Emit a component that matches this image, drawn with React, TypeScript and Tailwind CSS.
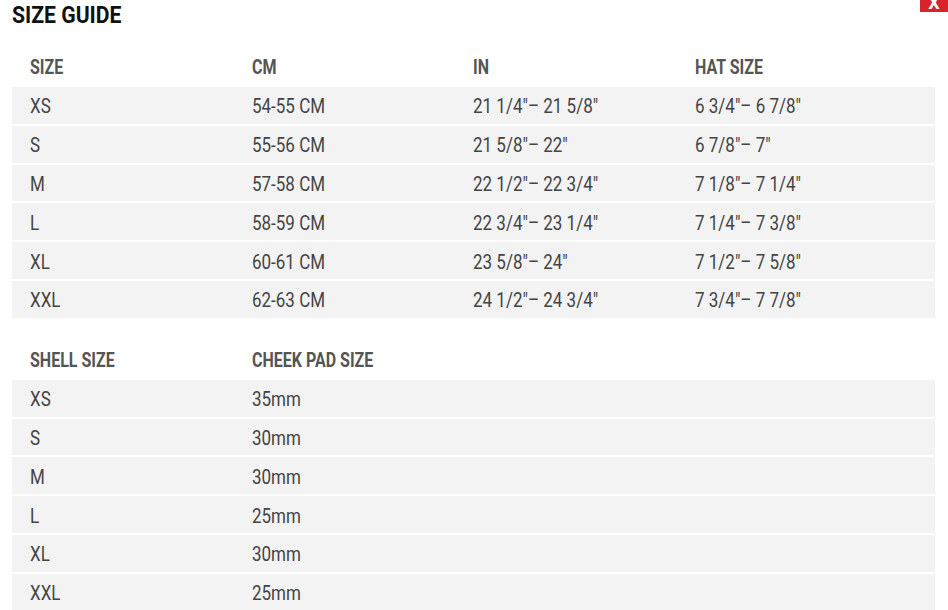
import React from "react";

const font = { fontFamily: 'Roboto, "Liberation Sans", sans-serif' };

const sizes = [
  ["XS", "54-55 CM", "21 1/4\"– 21 5/8\"", "6 3/4\"– 6 7/8\""],
  ["S", "55-56 CM", "21 5/8\"– 22\"", "6 7/8\"– 7\""],
  ["M", "57-58 CM", "22 1/2\"– 22 3/4\"", "7 1/8\"– 7 1/4\""],
  ["L", "58-59 CM", "22 3/4\"– 23 1/4\"", "7 1/4\"– 7 3/8\""],
  ["XL", "60-61 CM", "23 5/8\"– 24\"", "7 1/2\"– 7 5/8\""],
  ["XXL", "62-63 CM", "24 1/2\"– 24 3/4\"", "7 3/4\"– 7 7/8\""],
];

const shells = [
  ["XS", "35mm"],
  ["S", "30mm"],
  ["M", "30mm"],
  ["L", "25mm"],
  ["XL", "30mm"],
  ["XXL", "25mm"],
];

const cols = "grid grid-cols-[222px_221px_222px_1fr]";

function Header({ cells }: { cells: string[] }) {
  return (
    <div className={`${cols} h-[40px] items-center text-[20px] font-bold text-[#555]`}>
      {cells.map((c, i) => (
        <div key={i} className="pl-[18px] whitespace-nowrap">
          <span className="inline-block origin-left scale-x-[0.8]">{c}</span>
        </div>
      ))}
    </div>
  );
}

function Row({ cells }: { cells: string[] }) {
  return (
    <div className={`${cols} h-[36.8px] mb-[2px] pt-[2px] items-center bg-[#f3f3f3] text-[20px] text-[#444]`}>
      {cells.map((c, i) => (
        <div key={i} className="pl-[18px] whitespace-pre">
          <span className="inline-block origin-left scale-x-[0.85]">{c}</span>
        </div>
      ))}
    </div>
  );
}

export default function App() {
  return (
    <div className="relative w-[948px] h-[610px] overflow-hidden bg-white" style={font}>
      <div className="absolute top-0 right-0 w-[28px] h-[12px] bg-[#d9232b] overflow-hidden flex justify-center">
        <span className="text-white font-bold text-[18px] leading-none -mt-[6px]">X</span>
      </div>
      <div className="pl-[12px] pr-[13px]">
        <h1 className="text-[23px] font-bold text-[#111] leading-[32px] h-[32px] whitespace-nowrap">
          <span className="inline-block origin-left scale-x-[0.92]">SIZE GUIDE</span>
        </h1>
        <div className="mt-[15px]">
          <Header cells={["SIZE", "CM", "IN", "HAT SIZE"]} />
          {sizes.map((r, i) => (
            <Row key={i} cells={r} />
          ))}
        </div>
        <div className="mt-[22px]">
          <Header cells={["SHELL SIZE", "CHEEK PAD SIZE", "", ""]} />
          {shells.map((r, i) => (
            <Row key={i} cells={[r[0], r[1], "", ""]} />
          ))}
        </div>
      </div>
    </div>
  );
}
